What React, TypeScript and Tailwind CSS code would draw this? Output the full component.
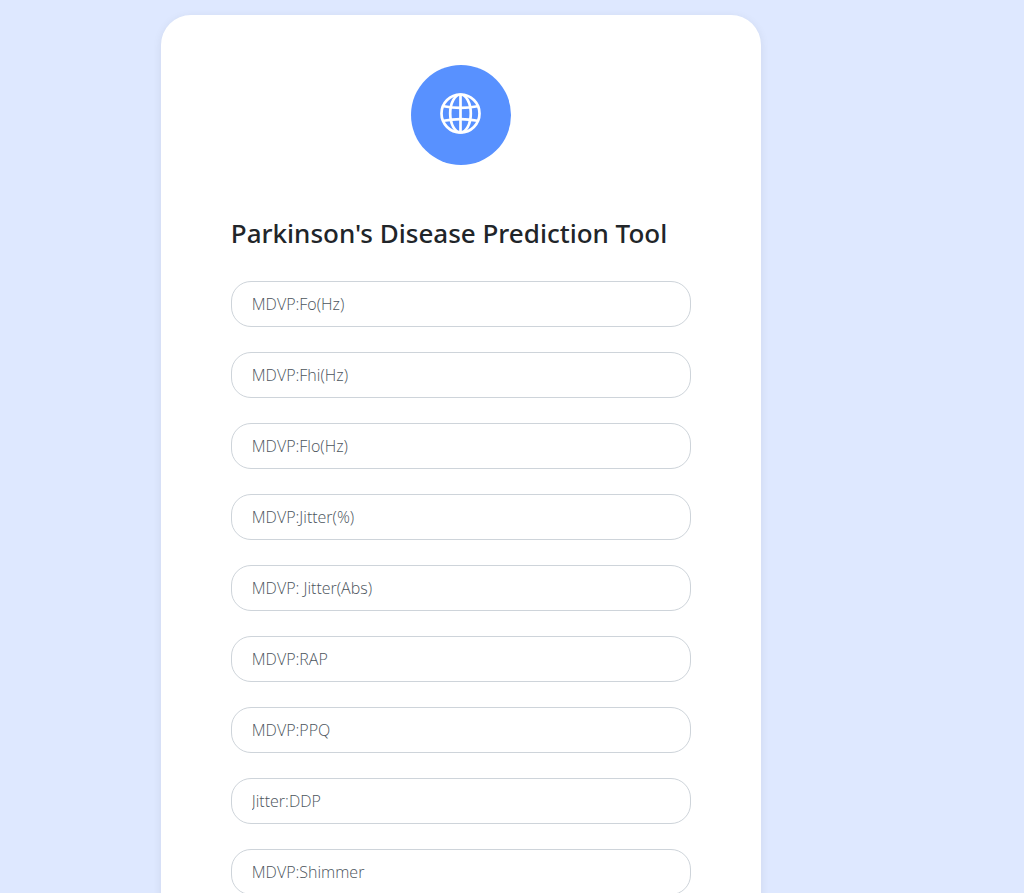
const fields: string[] = [
  'MDVP:Fo(Hz)',
  'MDVP:Fhi(Hz)',
  'MDVP:Flo(Hz)',
  'MDVP:Jitter(%)',
  'MDVP: Jitter(Abs)',
  'MDVP:RAP',
  'MDVP:PPQ',
  'Jitter:DDP',
  'MDVP:Shimmer',
];

function GlobeIcon() {
  return (
    <svg
      width="42"
      height="42"
      viewBox="0 0 42 42"
      fill="none"
      stroke="currentColor"
      strokeWidth="2.7"
      aria-hidden="true"
    >
      <circle cx="20.5" cy="20.5" r="19" />
      <ellipse cx="20.5" cy="20.5" rx="10.3" ry="19" />
      <path d="M20.500 1.500v38" />
      <path d="M3.600 13.200q17 3.400 34 0" />
      <path d="M3.600 27.800q17 -3.400 34 0" />
    </svg>
  );
}

function Field({ label }: { label: string }) {
  return (
    <input
      type="text"
      aria-label={label}
      placeholder={label}
      className="block h-[46px] w-full rounded-[20px] border border-[#ced4da] bg-white px-5 text-base font-light text-[#212529] placeholder:text-[#4b545c] placeholder:opacity-100"
    />
  );
}

export default function App() {
  return (
    <main className="min-h-screen bg-[#dee8ff] py-[15px] font-['Open_Sans','Noto_Sans',sans-serif]">
      <div className="w-[90%]">
        <form className="mx-auto max-w-[600px] rounded-[30px] bg-white px-[70px] py-[50px] shadow-[0_2px_10px_rgba(0,0,0,0.075)]">
          <div className="mx-auto mb-[50px] flex size-[100px] items-center justify-center rounded-full bg-[#5891ff] pb-0.5 text-white">
            <GlobeIcon />
          </div>
          <h1 className="mb-[30px] font-['Noto_Sans',sans-serif] text-[26px] leading-9 font-medium text-[#212529]">
            Parkinson's Disease Prediction Tool
          </h1>
          <div className="flex flex-col gap-[25px]">
            {fields.map((label) => (
              <Field key={label} label={label} />
            ))}
          </div>
        </form>
      </div>
    </main>
  );
}
